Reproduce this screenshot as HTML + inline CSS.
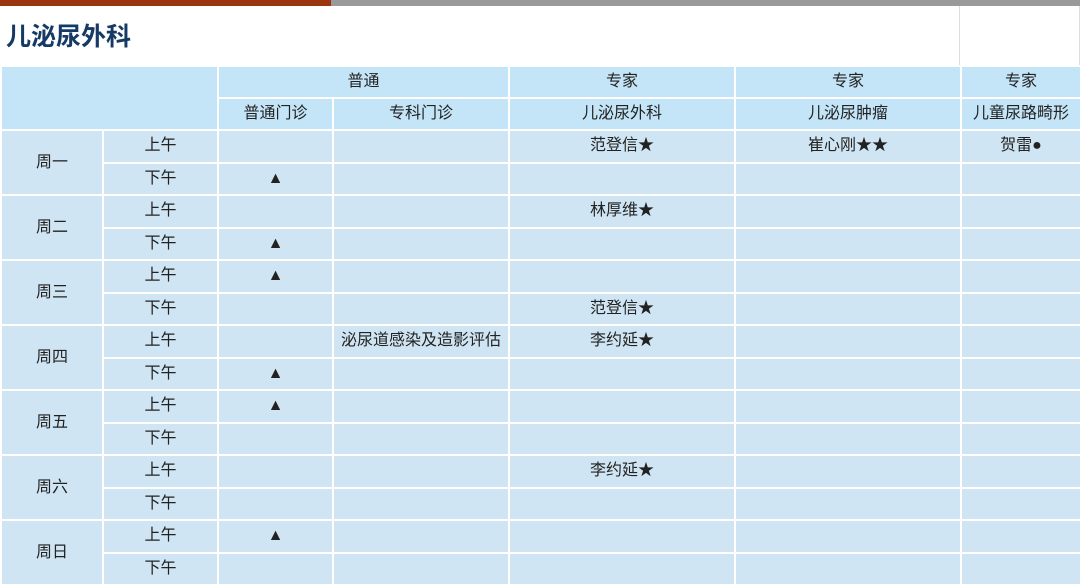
<!DOCTYPE html>
<html><head><meta charset="utf-8"><style>
html,body{margin:0;padding:0;background:#fff;width:1080px;height:584px;overflow:hidden;font-family:"Liberation Sans","Noto Sans CJK SC",sans-serif}
.bar1{position:absolute;left:0;top:0;width:331px;height:6px;background:#9b3510}
.bar2{position:absolute;left:331px;top:0;width:749px;height:6px;background:#9a9a9a}
.title{position:absolute;left:6px;top:20px;font-size:25px;line-height:34px;font-weight:bold;color:#153a66}
.vl{position:absolute;left:959px;top:6px;width:1px;height:59px;background:#ddd}
.vr{position:absolute;left:1079px;top:6px;width:1px;height:59px;background:#ddd}
table{position:absolute;left:0;top:65px;border-collapse:collapse;table-layout:fixed;width:1080px}
td{border:2px solid #fff;text-align:center;font-size:16px;line-height:18px;color:#222;padding:0;background:#d0e5f3;white-space:nowrap;overflow:hidden}
tr{height:32.5px}
tr.h{height:32px}
tr.h td{background:#c4e5f7}
</style></head><body>
<div class="bar1"></div><div class="bar2"></div>
<div class="title">儿泌尿外科</div><div class="vl"></div><div class="vr"></div>
<table>
<colgroup><col style="width:102px"><col style="width:115px"><col style="width:115px"><col style="width:176px"><col style="width:226px"><col style="width:226px"><col style="width:120px"></colgroup>
<tr class="h"><td colspan="2" rowspan="2"></td><td colspan="2">普通</td><td>专家</td><td>专家</td><td>专家</td></tr>
<tr class="h"><td>普通门诊</td><td>专科门诊</td><td>儿泌尿外科</td><td>儿泌尿肿瘤</td><td>儿童尿路畸形</td></tr>
<tr><td rowspan="2">周一</td><td>上午</td><td></td><td></td><td>范登信★</td><td>崔心刚★★</td><td>贺雷●</td></tr>
<tr><td>下午</td><td>▲</td><td></td><td></td><td></td><td></td></tr>
<tr><td rowspan="2">周二</td><td>上午</td><td></td><td></td><td>林厚维★</td><td></td><td></td></tr>
<tr><td>下午</td><td>▲</td><td></td><td></td><td></td><td></td></tr>
<tr><td rowspan="2">周三</td><td>上午</td><td>▲</td><td></td><td></td><td></td><td></td></tr>
<tr><td>下午</td><td></td><td></td><td>范登信★</td><td></td><td></td></tr>
<tr><td rowspan="2">周四</td><td>上午</td><td></td><td>泌尿道感染及造影评估</td><td>李约延★</td><td></td><td></td></tr>
<tr><td>下午</td><td>▲</td><td></td><td></td><td></td><td></td></tr>
<tr><td rowspan="2">周五</td><td>上午</td><td>▲</td><td></td><td></td><td></td><td></td></tr>
<tr><td>下午</td><td></td><td></td><td></td><td></td><td></td></tr>
<tr><td rowspan="2">周六</td><td>上午</td><td></td><td></td><td>李约延★</td><td></td><td></td></tr>
<tr><td>下午</td><td></td><td></td><td></td><td></td><td></td></tr>
<tr><td rowspan="2">周日</td><td>上午</td><td>▲</td><td></td><td></td><td></td><td></td></tr>
<tr><td>下午</td><td></td><td></td><td></td><td></td><td></td></tr>
</table>
</body></html>
